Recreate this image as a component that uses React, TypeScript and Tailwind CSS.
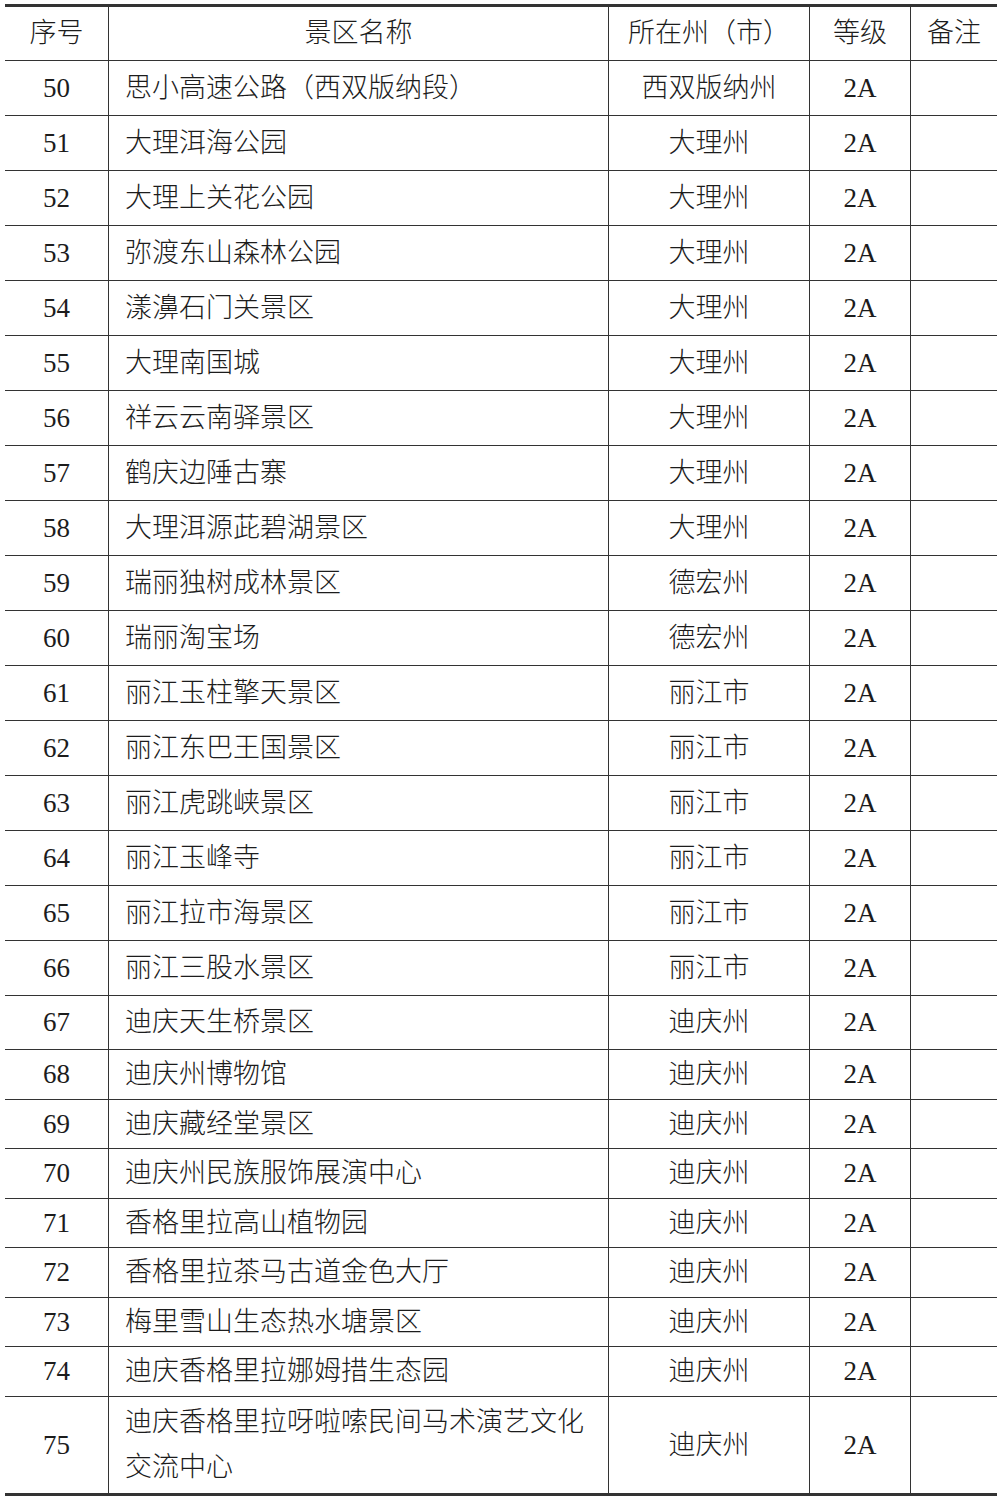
import React from "react";

type Row = { no: string; name: string[]; city: string; level: string; h: string };

const DATA: [string, string, string][] = [
  ["50", "思小高速公路（西双版纳段）", "西双版纳州"],
  ["51", "大理洱海公园", "大理州"],
  ["52", "大理上关花公园", "大理州"],
  ["53", "弥渡东山森林公园", "大理州"],
  ["54", "漾濞石门关景区", "大理州"],
  ["55", "大理南国城", "大理州"],
  ["56", "祥云云南驿景区", "大理州"],
  ["57", "鹤庆边陲古寨", "大理州"],
  ["58", "大理洱源茈碧湖景区", "大理州"],
  ["59", "瑞丽独树成林景区", "德宏州"],
  ["60", "瑞丽淘宝场", "德宏州"],
  ["61", "丽江玉柱擎天景区", "丽江市"],
  ["62", "丽江东巴王国景区", "丽江市"],
  ["63", "丽江虎跳峡景区", "丽江市"],
  ["64", "丽江玉峰寺", "丽江市"],
  ["65", "丽江拉市海景区", "丽江市"],
  ["66", "丽江三股水景区", "丽江市"],
  ["67", "迪庆天生桥景区", "迪庆州"],
  ["68", "迪庆州博物馆", "迪庆州"],
  ["69", "迪庆藏经堂景区", "迪庆州"],
  ["70", "迪庆州民族服饰展演中心", "迪庆州"],
  ["71", "香格里拉高山植物园", "迪庆州"],
  ["72", "香格里拉茶马古道金色大厅", "迪庆州"],
  ["73", "梅里雪山生态热水塘景区", "迪庆州"],
  ["74", "迪庆香格里拉娜姆措生态园", "迪庆州"],
];

// row heights copied from the scan
const HEIGHTS = [
  ...Array(17).fill("h-[55px]"),
  "h-[54px]",
  "h-[50px]",
  "h-[49px]",
  "h-[50px]",
  "h-[49px]",
  "h-[50px]",
  "h-[49px]",
  "h-[50px]",
];

const ROWS: Row[] = [
  ...DATA.map(([no, name, city], i) => ({ no, name: [name], city, level: "2A", h: HEIGHTS[i] })),
  { no: "75", name: ["迪庆香格里拉呀啦嗦民间马术演艺文化", "交流中心"], city: "迪庆州", level: "2A", h: "h-[96px]" },
];

const cell = "flex items-center border-r-[1.5px] border-[#333]";

// full-width parens get squeezed by the font, so give each a full em box
function Cjk({ text }: { text: string }) {
  const parts = text.split(/([（）])/);
  return (
    <span>
      {parts.map((p, i) =>
        p === "（" ? (
          <span key={i} className="inline-block w-[1em] text-right">
            （
          </span>
        ) : p === "）" ? (
          <span key={i} className="inline-block w-[1em] text-left">
            ）
          </span>
        ) : (
          p
        )
      )}
    </span>
  );
}

function TableRow({ row, last }: { row: Row; last: boolean }) {
  return (
    <div
      className={`grid grid-cols-[104px_500px_201px_101px_86px] ${row.h} ${
        last ? "" : "border-b-[1.5px] border-[#333]"
      }`}
    >
      <div className={`${cell} justify-center`}>{row.no}</div>
      <div className={`${cell} pl-[16px]`}>
        <div className="flex flex-col leading-[45px]">
          {row.name.map((n) => (
            <Cjk key={n} text={n} />
          ))}
        </div>
      </div>
      <div className={`${cell} justify-center`}>{row.city}</div>
      <div className={`${cell} justify-center`}>{row.level}</div>
      <div />
    </div>
  );
}

export default function App() {
  return (
    <div className="w-[1003px] h-[1500px] bg-white pt-[4px] pl-[5px]">
      <div
        className="w-[992px] border-y-[3px] border-[#333] text-[27px] text-[#1c1c1c] font-light"
        style={{ fontFamily: '"Liberation Serif", "Noto Sans CJK SC", serif' }}
      >
        <div className="grid grid-cols-[104px_500px_201px_101px_86px] h-[54px] border-b-[1.5px] border-[#333]">
          <div className={`${cell} justify-center`}>序号</div>
          <div className={`${cell} justify-center`}>景区名称</div>
          <div className={`${cell} justify-center`}>
            <Cjk text="所在州（市）" />
          </div>
          <div className={`${cell} justify-center`}>等级</div>
          <div className="flex items-center justify-center">备注</div>
        </div>
        {ROWS.map((r, i) => (
          <TableRow key={r.no} row={r} last={i === ROWS.length - 1} />
        ))}
      </div>
    </div>
  );
}
